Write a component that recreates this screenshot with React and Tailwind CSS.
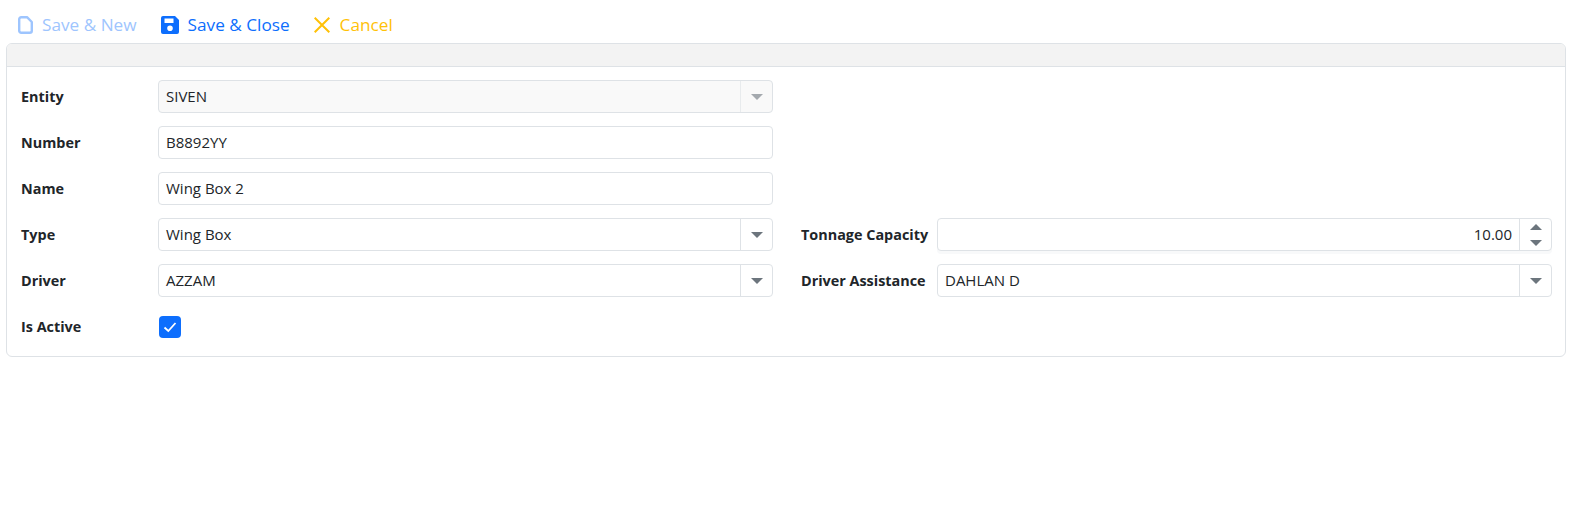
import React from "react";

const Caret = ({ up }) => (
  <svg width="12" height="6" viewBox="0 0 12 6" className="block">
    <path d={up ? "M6 0L12 6H0Z" : "M0 0H12L6 6Z"} fill="#6c757d" />
  </svg>
);

const Field = ({ value, select, disabled }) => (
  <div className={`flex h-[33px] flex-1 items-stretch rounded-[4px] border border-[#dee2e6] ${disabled ? "bg-[#f9f9f9]" : "bg-white"}`}>
    <div className="flex flex-1 items-center pb-[2px] pl-[7px] text-[15px] text-[#212529]">{value}</div>
    {select && (
      <div className={`flex w-[32px] items-center justify-center border-l border-[#dee2e6] ${disabled ? "opacity-60" : ""}`}>
        <Caret />
      </div>
    )}
  </div>
);

const Label = ({ children, w }) => (
  <div className={`${w} shrink-0 text-[14.4px] font-bold text-[#212529]`}>{children}</div>
);

const Row = ({ label, children, right }) => (
  <div className="grid grid-cols-[752px_751px] gap-x-[28px]">
    <div className="flex items-center">
      <Label w="w-[137px]">{label}</Label>
      {children}
    </div>
    {right}
  </div>
);

export default function App() {
  return (
    <div className="h-[524px] bg-white pl-[6px] pr-[8px] font-['Open_Sans','Noto_Sans',sans-serif] text-[14px] leading-[20px]">
      <div className="flex h-[43px] items-center pl-[12px] pt-[6px] text-[17.2px]">
        <button className="flex items-center gap-[9px] text-[#9ec5fe]">
          <svg width="15" height="18" viewBox="0 0 15 18" fill="none" stroke="#9ec5fe" strokeWidth="2.400" strokeLinejoin="round">
            <path d="M3.200 1.200H9L13.800 6V14.800A2 2 0 0 1 11.800 16.800H3.200A2 2 0 0 1 1.200 14.800V3.200A2 2 0 0 1 3.200 1.200Z" />
          </svg>
          Save &amp; New
        </button>
        <button className="ml-[24px] flex items-center gap-[9px] text-[#0d6efd]">
          <svg width="18" height="18" viewBox="0 0 18 18">
            <path fillRule="evenodd" fill="#0d6efd" d="M2 0H14L18 4V16A2 2 0 0 1 16 18H2A2 2 0 0 1 0 16V2A2 2 0 0 1 2 0ZM3.500 2.500V7H12.500V2.500ZM9 9.500A2.800 2.800 0 1 0 9 15.100A2.800 2.800 0 1 0 9 9.500Z" />
          </svg>
          Save &amp; Close
        </button>
        <button className="ml-[24px] flex items-center gap-[10px] text-[#ffc107]">
          <svg width="16" height="16" viewBox="0 0 16 16" fill="none" stroke="#ffc107" strokeWidth="2">
            <path d="M.7 .7L15.300 15.300M15.300 .7L.7 15.300" />
          </svg>
          Cancel
        </button>
      </div>
      <div className="h-[314px] rounded-[6px] border border-[#dee2e6] bg-white">
        <div className="h-[23px] rounded-t-[5px] border-b border-[#dee2e6] bg-[#f3f3f3]" />
        <div className="flex flex-col gap-[13px] pl-[14px] pr-[13px] pt-[13px]">
          <Row label="Entity"><Field value="SIVEN" select disabled /></Row>
          <Row label="Number"><Field value="B8892YY" /></Row>
          <Row label="Name"><Field value="Wing Box 2" /></Row>
          <Row
            label="Type"
            right={
              <div className="flex items-center">
                <Label w="w-[136px]">Tonnage Capacity</Label>
                <div className="flex h-[33px] flex-1 items-stretch rounded-[4px] border border-[#dee2e6] bg-white shadow-[0_3px_0_#f8f9fa]">
                  <div className="flex flex-1 items-center justify-end pb-[2px] pr-[7px] text-[15px] text-[#212529]">10.00</div>
                  <div className="flex w-[32px] flex-col items-center justify-center gap-[10px] border-l border-[#dee2e6]">
                    <Caret up />
                    <Caret />
                  </div>
                </div>
              </div>
            }
          >
            <Field value="Wing Box" select />
          </Row>
          <Row
            label="Driver"
            right={
              <div className="flex items-center">
                <Label w="w-[136px]">Driver Assistance</Label>
                <Field value="DAHLAN D" select />
              </div>
            }
          >
            <Field value="AZZAM" select />
          </Row>
          <Row label="Is Active">
            <div className="ml-[1px] flex h-[33px] items-center">
              <div className="flex h-[22px] w-[22px] items-center justify-center rounded-[4px] bg-[#0d6efd]">
                <svg width="16" height="16" viewBox="0 0 16 16" fill="none" stroke="white" strokeWidth="1.800">
                  <path d="M2.500 8.500L6.300 12L13.500 4" />
                </svg>
              </div>
            </div>
          </Row>
        </div>
      </div>
    </div>
  );
}
